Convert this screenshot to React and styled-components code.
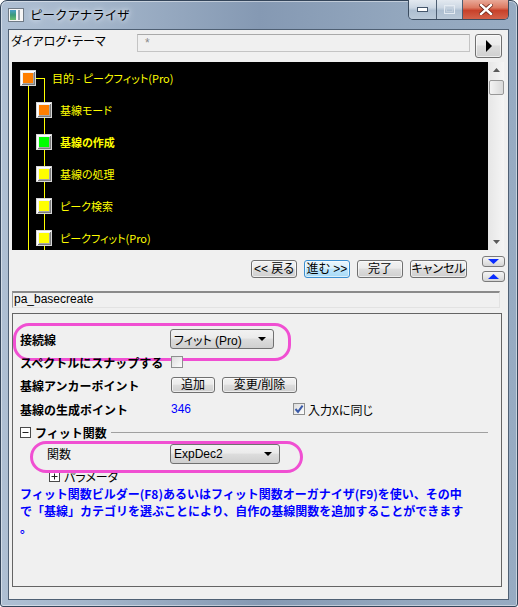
import React from 'react'
import styled, { createGlobalStyle } from 'styled-components'

const GlobalStyle = createGlobalStyle`
    html, body {
        margin: 0;
        padding: 0;
        background: #ffffff;
    }
    body {
        font-family: 'Liberation Sans', 'Noto Sans CJK JP', sans-serif;
        font-size: 12px;
        color: #000;
    }
    * {
        box-sizing: border-box;
    }
`

const Window = styled.div`
    width: 518px;
    height: 607px;
    display: flex;
    flex-direction: column;
    padding: 0 8px 6px 7px;
    border: 1px solid #34455a;
    border-radius: 7px 7px 3px 3px;
    background: linear-gradient(90deg, #aebfd3 0%, #a3b5ca 18%, #8599b3 50%, #93a7be 78%, #97abc2 100%);
    box-shadow: inset 0 0 0 1px rgba(255, 255, 255, 0.45);
`

const TitleBar = styled.div`
    height: 28px;
    display: flex;
    align-items: flex-start;
    flex-shrink: 0;
`

const TitleIcon = styled.svg`
    margin-top: 7px;
    flex-shrink: 0;
`

const TitleText = styled.div`
    margin: 6px 0 0 6px;
    font-family: 'Noto Sans CJK JP', sans-serif;
    font-size: 12.5px;
    line-height: 16px;
    color: #000;
    text-shadow: 0 0 8px #e8eef5, 0 0 4px #e8eef5;
`

const CaptionButtons = styled.div`
    margin-left: auto;
    display: flex;
    height: 20px;
    margin-top: -1px;
    border: 1px solid #3b4c60;
    border-top: none;
    border-radius: 0 0 5px 5px;
    overflow: hidden;
`

const CaptionButton = styled.div`
    width: ${p => p.$w}px;
    height: 100%;
    display: flex;
    align-items: center;
    justify-content: center;
    border-left: ${p => (p.$first ? 'none' : '1px solid #4d5e72')};
    background: ${p =>
        p.$close
            ? 'linear-gradient(#e9a998 0%, #dc7a62 40%, #c8412a 55%, #d3624a 100%)'
            : 'linear-gradient(#e3e9f0 0%, #ccd7e3 40%, #aebfd1 55%, #bac9d8 100%)'};
`

const Client = styled.div`
    flex: 1;
    display: flex;
    flex-direction: column;
    background: #f0f0f0;
    border: 1px solid #4f6074;
    padding: 0 3px 12px 3px;
`

const ThemeRow = styled.div`
    display: flex;
    align-items: flex-start;
    height: 24px;
    margin-top: 4px;
    margin-right: 3px;
`

const ThemeLabel = styled.div`
    width: 125px;
    margin-left: -1px;
    font-family: 'Noto Sans CJK JP', sans-serif;
    font-feature-settings: 'palt';
    font-size: 12px;
    line-height: 14px;
`

const ThemeInput = styled.div`
    flex: 1;
    height: 18px;
    margin-left: 1px;
    border: 1px solid #c4c4c4;
    border-top-color: #a9a9a9;
    background: #f0f0f0;
    color: #8a8a8a;
    font-size: 12px;
    line-height: 16px;
    padding-left: 7px;
`

const Button = styled.div`
    width: ${p => p.$w}px;
    height: ${p => p.$h || 18}px;
    display: flex;
    align-items: center;
    justify-content: center;
    flex-shrink: 0;
    border: 1px solid ${p => (p.$focus ? '#3c8fd0' : '#707070')};
    border-radius: 3px;
    background: ${p =>
        p.$focus
            ? 'linear-gradient(#eaf6fd 0%, #d9f0fc 45%, #bee6fd 50%, #a7d9f5 100%)'
            : 'linear-gradient(#f2f2f2 0%, #ebebeb 45%, #dddddd 50%, #cfcfcf 100%)'};
    box-shadow: inset 0 0 0 1px rgba(255, 255, 255, 0.6);
    font-family: 'Liberation Sans', 'Noto Sans CJK JP', sans-serif;
    font-feature-settings: 'palt';
    font-size: 12px;
    line-height: 14px;
    white-space: nowrap;
    margin-left: ${p => p.$ml || 0}px;
`

const TreePanel = styled.div`
    display: flex;
    height: 188px;
    margin-top: 4px;
    margin-right: 1px;
`

const TreeView = styled.div`
    position: relative;
    flex: 1;
    background: #000;
    overflow: hidden;
`

const TreeLines = styled.svg`
    position: absolute;
    left: 0;
    top: 0;
`

const TreeRow = styled.div`
    position: relative;
    height: 32px;
    display: flex;
    align-items: center;
    padding-left: ${p => (p.$root ? 8 : 24)}px;
`

const NodeBox = styled.div`
    width: 16px;
    height: 16px;
    flex-shrink: 0;
    border: 1px solid #d6d6d6;
    background: ${p => p.$color};
    box-shadow: inset 1px 1px 0 #ffffff, inset -1px -1px 0 #7c7c7c, inset 2px 2px 0 #f2f2f2, inset -2px -2px 0 #a8a8a8;
`

const NodeLabel = styled.span`
    margin-left: ${p => (p.$root ? 16 : 8)}px;
    color: #ffff00;
    font-family: 'Noto Sans CJK JP', sans-serif;
    font-feature-settings: 'palt';
    font-size: 11px;
    font-weight: ${p => (p.$bold ? 700 : 400)};
    white-space: nowrap;
`

const ScrollBar = styled.div`
    width: 16px;
    display: flex;
    flex-direction: column;
    align-items: center;
    background: linear-gradient(90deg, #e6e6e6, #f5f5f5);
`

const ScrollArrow = styled.div`
    height: 16px;
    width: 100%;
    display: flex;
    align-items: center;
    justify-content: center;
`

const ScrollThumb = styled.div`
    width: 15px;
    height: 15px;
    margin-top: 2px;
    margin-left: 1px;
    border: 1px solid #979797;
    border-radius: 2px;
    background: linear-gradient(90deg, #f3f3f3, #d9d9d9);
`

const ScrollSpacer = styled.div`
    flex: 1;
`

const NavRow = styled.div`
    height: 26px;
    margin-top: 6px;
    display: flex;
    align-items: center;
    justify-content: flex-end;
    gap: 7px;
`

const StepButtons = styled.div`
    display: flex;
    flex-direction: column;
    gap: 4px;
    margin-left: 8px;
`

const StepButton = styled.div`
    width: 23px;
    height: 11px;
    display: flex;
    align-items: center;
    justify-content: center;
    border: 1px solid #7a7a7a;
    border-radius: 3px;
    background: linear-gradient(#f4f4f4 0%, #e6e6e6 50%, #d4d4d4 100%);
`

const NameBox = styled.div`
    height: 17px;
    margin-top: 9px;
    margin-right: 5px;
    border-top: 2px solid #8a8a8a;
    border-left: 1px solid #9c9c9c;
    border-bottom: 1px solid #e2e2e2;
    border-right: 1px solid #e2e2e2;
    background: #f0f0f0;
    font-size: 12px;
    line-height: 13px;
    padding-left: 1px;
`

const SettingsPanel = styled.div`
    flex: 1;
    margin-top: 5px;
    margin-right: 3px;
    border: 1px solid #646464;
    padding: 13px 13px 0 7px;
    display: flex;
    flex-direction: column;
`

const FieldRow = styled.div`
    position: relative;
    display: grid;
    grid-template-columns: 150px 1fr;
    align-items: center;
    height: ${p => p.$h}px;

    &::after {
        content: '';
        display: ${p => (p.$mark ? 'block' : 'none')};
        position: absolute;
        pointer-events: none;
        left: ${p => (p.$mark ? p.$mark.left : 0)}px;
        top: ${p => (p.$mark ? p.$mark.top : 0)}px;
        width: ${p => (p.$mark ? p.$mark.width : 0)}px;
        height: ${p => (p.$mark ? p.$mark.height : 0)}px;
        border: 3px solid #f04fd2;
        border-radius: 16px;
    }
`

const FieldLabel = styled.div`
    font-family: 'Noto Sans CJK JP', sans-serif;
    font-size: 12px;
    font-weight: ${p => (p.$bold ? 700 : 400)};
    padding-left: ${p => p.$indent || 0}px;
    white-space: nowrap;
`

const ValueGroup = styled.div`
    display: flex;
    align-items: center;
    gap: ${p => p.$gap || 0}px;
    padding-left: ${p => p.$pl || 0}px;
`

const Combo = styled.div`
    width: ${p => p.$w}px;
    height: 20px;
    display: flex;
    align-items: center;
    justify-content: space-between;
    padding: 0 7px 0 3px;
    border: 1px solid #707070;
    border-radius: 3px;
    background: linear-gradient(#f2f2f2 0%, #ebebeb 45%, #dddddd 50%, #cfcfcf 100%);
    font-family: 'Liberation Sans', 'Noto Sans CJK JP', sans-serif;
    font-feature-settings: 'palt';
    font-size: 12px;
`

const CheckBox = styled.div`
    width: 12px;
    height: 12px;
    flex-shrink: 0;
    display: flex;
    align-items: center;
    justify-content: center;
    border: 1px solid #8e8f8f;
    background: linear-gradient(135deg, #dcdcdc, #fdfdfd);
    margin-left: ${p => p.$ml || 0}px;
`

const Number = styled.span`
    width: 122px;
    color: #0000ff;
    font-size: 12px;
`

const CheckText = styled.span`
    margin-left: 3px;
    font-family: 'Noto Sans CJK JP', sans-serif;
    font-feature-settings: 'palt';
    font-size: 12px;
`

const GroupHeader = styled.div`
    height: 22px;
    display: flex;
    align-items: center;
`

const GroupTitle = styled.span`
    margin-left: 4px;
    font-family: 'Noto Sans CJK JP', sans-serif;
    font-size: 12px;
    font-weight: 700;
`

const GroupLine = styled.div`
    flex: 1;
    height: 1px;
    margin-left: 4px;
    background: #a0a0a0;
`

const SubHeader = styled.div`
    height: 20px;
    margin-top: 2px;
    display: flex;
    align-items: center;
    padding-left: 29px;
`

const SubTitle = styled.span`
    margin-left: 4px;
    font-family: 'Noto Sans CJK JP', sans-serif;
    font-feature-settings: 'palt';
    font-size: 12px;
`

const Note = styled.div`
    margin-top: -1px;
    color: #0000ff;
    font-family: 'Noto Sans CJK JP', sans-serif;
    font-size: 12px;
    font-weight: 700;
    line-height: 17px;
    white-space: nowrap;
`

function ToggleBox({ plus }) {
    return (
        <svg width="11" height="11" viewBox="0 0 11 11">
            <rect x="0.5" y="0.5" width="10" height="10" fill="#fff" stroke="#4a4a4a" />
            <line x1="2.5" y1="5.5" x2="8.5" y2="5.5" stroke="#222" />
            {plus && <line x1="5.5" y1="2.5" x2="5.5" y2="8.5" stroke="#222" />}
        </svg>
    )
}

function DropArrow() {
    return (
        <svg width="8" height="4" viewBox="0 0 8 4">
            <path d="M0 0 H8 L4 4 Z" fill="#000" />
        </svg>
    )
}

function Check() {
    return (
        <svg width="10" height="10" viewBox="0 0 10 10">
            <path d="M1.5 5 L4 7.8 L8.6 1.6" fill="none" stroke="#3a5aa8" strokeWidth="2" />
        </svg>
    )
}

const nodes = [
    { label: '目的 - ピークフィット(Pro)', color: '#ff7f00', root: true },
    { label: '基線モード', color: '#ff7f00' },
    { label: '基線の作成', color: '#00ff00', bold: true },
    { label: '基線の処理', color: '#ffff00' },
    { label: 'ピーク検索', color: '#ffff00' },
    { label: 'ピークフィット(Pro)', color: '#ffff00' },
]

function App() {
    return (
        <>
            <GlobalStyle />
            <Window>
                <TitleBar>
                    <TitleIcon width="16" height="14" viewBox="0 0 16 14">
                        <defs>
                            <linearGradient id="ic" x1="0" y1="0" x2="0" y2="1">
                                <stop offset="0" stopColor="#4aa0c8" />
                                <stop offset="0.5" stopColor="#3b9a7a" />
                                <stop offset="1" stopColor="#6cc070" />
                            </linearGradient>
                        </defs>
                        <rect x="0.5" y="0.5" width="15" height="13" fill="#f6f6f6" stroke="#6f7a86" />
                        <rect x="2" y="2" width="6" height="10" fill="url(#ic)" />
                        <rect x="10" y="2" width="2" height="10" fill="#9aa4ae" />
                    </TitleIcon>
                    <TitleText>ピークアナライザ</TitleText>
                    <CaptionButtons>
                        <CaptionButton $w={27} $first>
                            <svg width="11" height="5" viewBox="0 0 11 5">
                                <rect x="0.5" y="0.5" width="10" height="4" fill="#fff" stroke="#45566b" />
                            </svg>
                        </CaptionButton>
                        <CaptionButton $w={26}>
                            <svg width="11" height="9" viewBox="0 0 11 9">
                                <rect x="0.5" y="0.5" width="10" height="8" fill="none" stroke="#e4ebf2" strokeWidth="1" />
                                <rect x="2.5" y="2.5" width="6" height="4" fill="none" stroke="#c3cfdc" />
                            </svg>
                        </CaptionButton>
                        <CaptionButton $w={46} $close>
                            <svg width="14" height="11" viewBox="0 0 14 11">
                                <path d="M2 1 L12 10 M12 1 L2 10" stroke="#6b2416" strokeWidth="4" strokeLinecap="square" />
                                <path d="M2 1 L12 10 M12 1 L2 10" stroke="#ffffff" strokeWidth="2.4" strokeLinecap="square" />
                            </svg>
                        </CaptionButton>
                    </CaptionButtons>
                </TitleBar>
                <Client>
                    <ThemeRow>
                        <ThemeLabel>ダイアログ・テーマ</ThemeLabel>
                        <ThemeInput>*</ThemeInput>
                        <Button $w={27} $h={24} $ml={5}>
                            <svg width="8" height="12" viewBox="0 0 8 12">
                                <path d="M1 0 L7 6 L1 12 Z" fill="#000" />
                            </svg>
                        </Button>
                    </ThemeRow>
                    <TreePanel>
                        <TreeView>
                            <TreeLines width="476" height="188" shapeRendering="crispEdges">
                                <line x1="16.5" y1="24" x2="16.5" y2="188" stroke="#ffff00" />
                                <line x1="24" y1="16.5" x2="32" y2="16.5" stroke="#ffff00" />
                                <line x1="32.5" y1="16" x2="32.5" y2="188" stroke="#ffff00" />
                            </TreeLines>
                            {nodes.map(n => (
                                <TreeRow key={n.label} $root={n.root}>
                                    <NodeBox $color={n.color} />
                                    <NodeLabel $root={n.root} $bold={n.bold}>{n.label}</NodeLabel>
                                </TreeRow>
                            ))}
                        </TreeView>
                        <ScrollBar>
                            <ScrollArrow>
                                <svg width="7" height="4" viewBox="0 0 7 4">
                                    <path d="M0 4 L3.5 0 L7 4 Z" fill="#5a5a5a" />
                                </svg>
                            </ScrollArrow>
                            <ScrollThumb />
                            <ScrollSpacer />
                            <ScrollArrow>
                                <svg width="7" height="4" viewBox="0 0 7 4">
                                    <path d="M0 0 L7 0 L3.5 4 Z" fill="#5a5a5a" />
                                </svg>
                            </ScrollArrow>
                        </ScrollBar>
                    </TreePanel>
                    <NavRow>
                        <Button $w={46}>&lt;&lt; 戻る</Button>
                        <Button $w={46} $focus>進む &gt;&gt;</Button>
                        <Button $w={46}>完了</Button>
                        <Button $w={57}>キャンセル</Button>
                        <StepButtons>
                            <StepButton>
                                <svg width="11" height="5" viewBox="0 0 11 5">
                                    <path d="M0 0 H11 L5.5 5 Z" fill="#0a2cff" />
                                </svg>
                            </StepButton>
                            <StepButton>
                                <svg width="11" height="5" viewBox="0 0 11 5">
                                    <path d="M0 5 H11 L5.5 0 Z" fill="#0a2cff" />
                                </svg>
                            </StepButton>
                        </StepButtons>
                    </NavRow>
                    <NameBox>pa_basecreate</NameBox>
                    <SettingsPanel>
                        <FieldRow $h={24} $mark={{ left: -7, top: -4, width: 272, height: 32 }}>
                            <FieldLabel $bold>接続線</FieldLabel>
                            <Combo $w={104}>
                                <span>フィット (Pro)</span>
                                <DropArrow />
                            </Combo>
                        </FieldRow>
                        <FieldRow $h={22}>
                            <FieldLabel $bold>スペクトルにスナップする</FieldLabel>
                            <ValueGroup $pl={1}>
                                <CheckBox />
                            </ValueGroup>
                        </FieldRow>
                        <FieldRow $h={24}>
                            <FieldLabel $bold>基線アンカーポイント</FieldLabel>
                            <ValueGroup $gap={7} $pl={1}>
                                <Button $w={44} $h={16}>追加</Button>
                                <Button $w={75} $h={16}>変更/削除</Button>
                            </ValueGroup>
                        </FieldRow>
                        <FieldRow $h={24}>
                            <FieldLabel $bold>基線の生成ポイント</FieldLabel>
                            <ValueGroup $pl={1}>
                                <Number>346</Number>
                                <CheckBox>
                                    <Check />
                                </CheckBox>
                                <CheckText>入力Xに同じ</CheckText>
                            </ValueGroup>
                        </FieldRow>
                        <GroupHeader>
                            <ToggleBox />
                            <GroupTitle>フィット関数</GroupTitle>
                            <GroupLine />
                        </GroupHeader>
                        <FieldRow $h={21} $mark={{ left: 10, top: -2, width: 267, height: 26 }}>
                            <FieldLabel $indent={27}>関数</FieldLabel>
                            <Combo $w={110}>
                                <span>ExpDec2</span>
                                <DropArrow />
                            </Combo>
                        </FieldRow>
                        <SubHeader>
                            <ToggleBox plus />
                            <SubTitle>パラメータ</SubTitle>
                        </SubHeader>
                        <Note>
                            フィット関数ビルダー(F8)あるいはフィット関数オーガナイザ(F9)を使い、その中
                            <br />
                            で「基線」カテゴリを選ぶことにより、自作の基線関数を追加することができます
                            <br />
                            。
                        </Note>
                    </SettingsPanel>
                </Client>
            </Window>
        </>
    )
}

export default App
